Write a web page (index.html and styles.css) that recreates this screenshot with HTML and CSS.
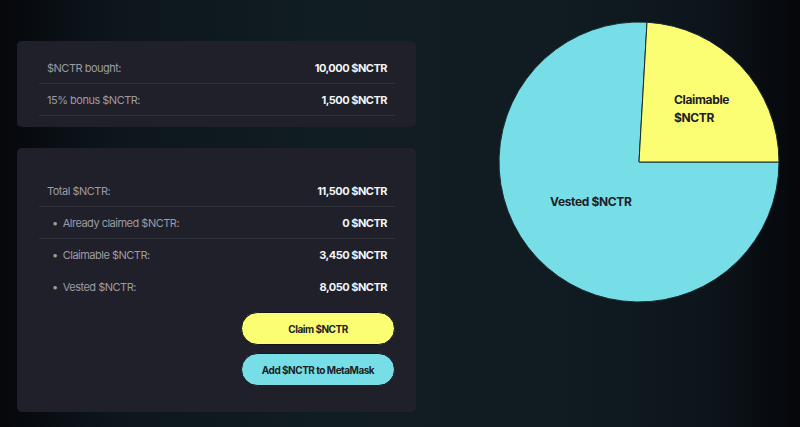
FILE: index.html
```html
<!DOCTYPE html>
<html lang="en">
<head>
  <meta charset="UTF-8">
  <title>$NCTR vesting</title>
  <link rel="stylesheet" href="styles.css">
</head>
<body>
<div class="page">
  <div class="left">
    <div class="card card-bought">
      <div class="row line">
        <span class="label">$NCTR bought:</span>
        <span class="value">10,000 $NCTR</span>
      </div>
      <div class="row line">
        <span class="label">15% bonus $NCTR:</span>
        <span class="value">1,500 $NCTR</span>
      </div>
    </div>

    <div class="card card-total">
      <div class="row line">
        <span class="label">Total $NCTR:</span>
        <span class="value">11,500 $NCTR</span>
      </div>
      <div class="row line">
        <span class="label dot">Already claimed $NCTR:</span>
        <span class="value">0 $NCTR</span>
      </div>
      <div class="row">
        <span class="label dot">Claimable $NCTR:</span>
        <span class="value">3,450 $NCTR</span>
      </div>
      <div class="row">
        <span class="label dot">Vested $NCTR:</span>
        <span class="value">8,050 $NCTR</span>
      </div>
      <div class="buttons">
        <button class="btn btn-claim">Claim $NCTR</button>
        <button class="btn btn-add">Add $NCTR to MetaMask</button>
      </div>
    </div>
  </div>

  <div class="chart">
    <svg width="284" height="284" viewBox="0 0 284 284">
      <!-- center 142,142 radius 140 -->
      <path class="slice-vested" d="M142 142 L282 142 A140 140 0 1 1 150 2.2 Z"/>
      <path class="slice-claim" d="M142 142 L150 2.2 A140 140 0 0 1 282 142 Z"/>
      <text class="pie-label" x="177" y="84">Claimable</text>
      <text class="pie-label" x="177" y="102">$NCTR</text>
      <text class="pie-label" x="53" y="186">Vested $NCTR</text>
    </svg>
  </div>
</div>
</body>
</html>
```

FILE: styles.css
```css
* {
  box-sizing: border-box;
}

body {
  margin: 0;
  width: 800px;
  height: 427px;
  overflow: hidden;
  font-family: Inter, "Noto Sans", sans-serif;
  background: linear-gradient(90deg, #05070b 0%, #0d161c 14%, #101d22 40%, #101c22 70%, #0d151c 88%, #05070a 100%);
}

.page {
  display: flex;
  padding: 41px 0 0 17px;
}

.left {
  width: 399px;
  display: flex;
  flex-direction: column;
  gap: 21px;
}

.card {
  background: #1f2029;
  border-radius: 5px;
  padding: 0 21px 0 22px;
}

.card-bought {
  padding-top: 11px;
  padding-bottom: 11px;
}

.card-total {
  padding-top: 27px;
  padding-bottom: 26px;
}

.row {
  display: flex;
  justify-content: space-between;
  align-items: center;
  height: 32px;
  padding: 0 8px;
  font-size: 11px;
  letter-spacing: -0.5px;
}

.row.line {
  border-bottom: 1px solid #30323b;
}

.label {
  color: #9b9ca3;
}

.label.dot::before {
  content: "•";
  margin: 0 5px 0 5px;
}

.value {
  color: #f4f4f6;
  font-weight: 700;
}

.buttons {
  display: flex;
  flex-direction: column;
  align-items: flex-end;
  gap: 8px;
  margin-top: 9px;
}

.btn {
  width: 154px;
  height: 33px;
  border: 1px solid #14161c;
  border-radius: 17px;
  font-family: inherit;
  font-size: 10px;
  letter-spacing: -0.5px;
  font-weight: 700;
  color: #1c1e26;
  cursor: pointer;
}

.btn-claim {
  background: #fbfd72;
}

.btn-add {
  background: #77dde7;
}

.chart {
  margin: -21px 0 0 81px;
}

.slice-vested {
  fill: #77dde7;
  stroke: #1b2a30;
  stroke-width: 1;
}

.slice-claim {
  fill: #fbfd72;
  stroke: #1b2a30;
  stroke-width: 1;
}

.pie-label {
  font-family: Inter, "Noto Sans", sans-serif;
  font-size: 12px;
  letter-spacing: -0.35px;
  font-weight: 700;
  fill: #1e2029;
}
```
